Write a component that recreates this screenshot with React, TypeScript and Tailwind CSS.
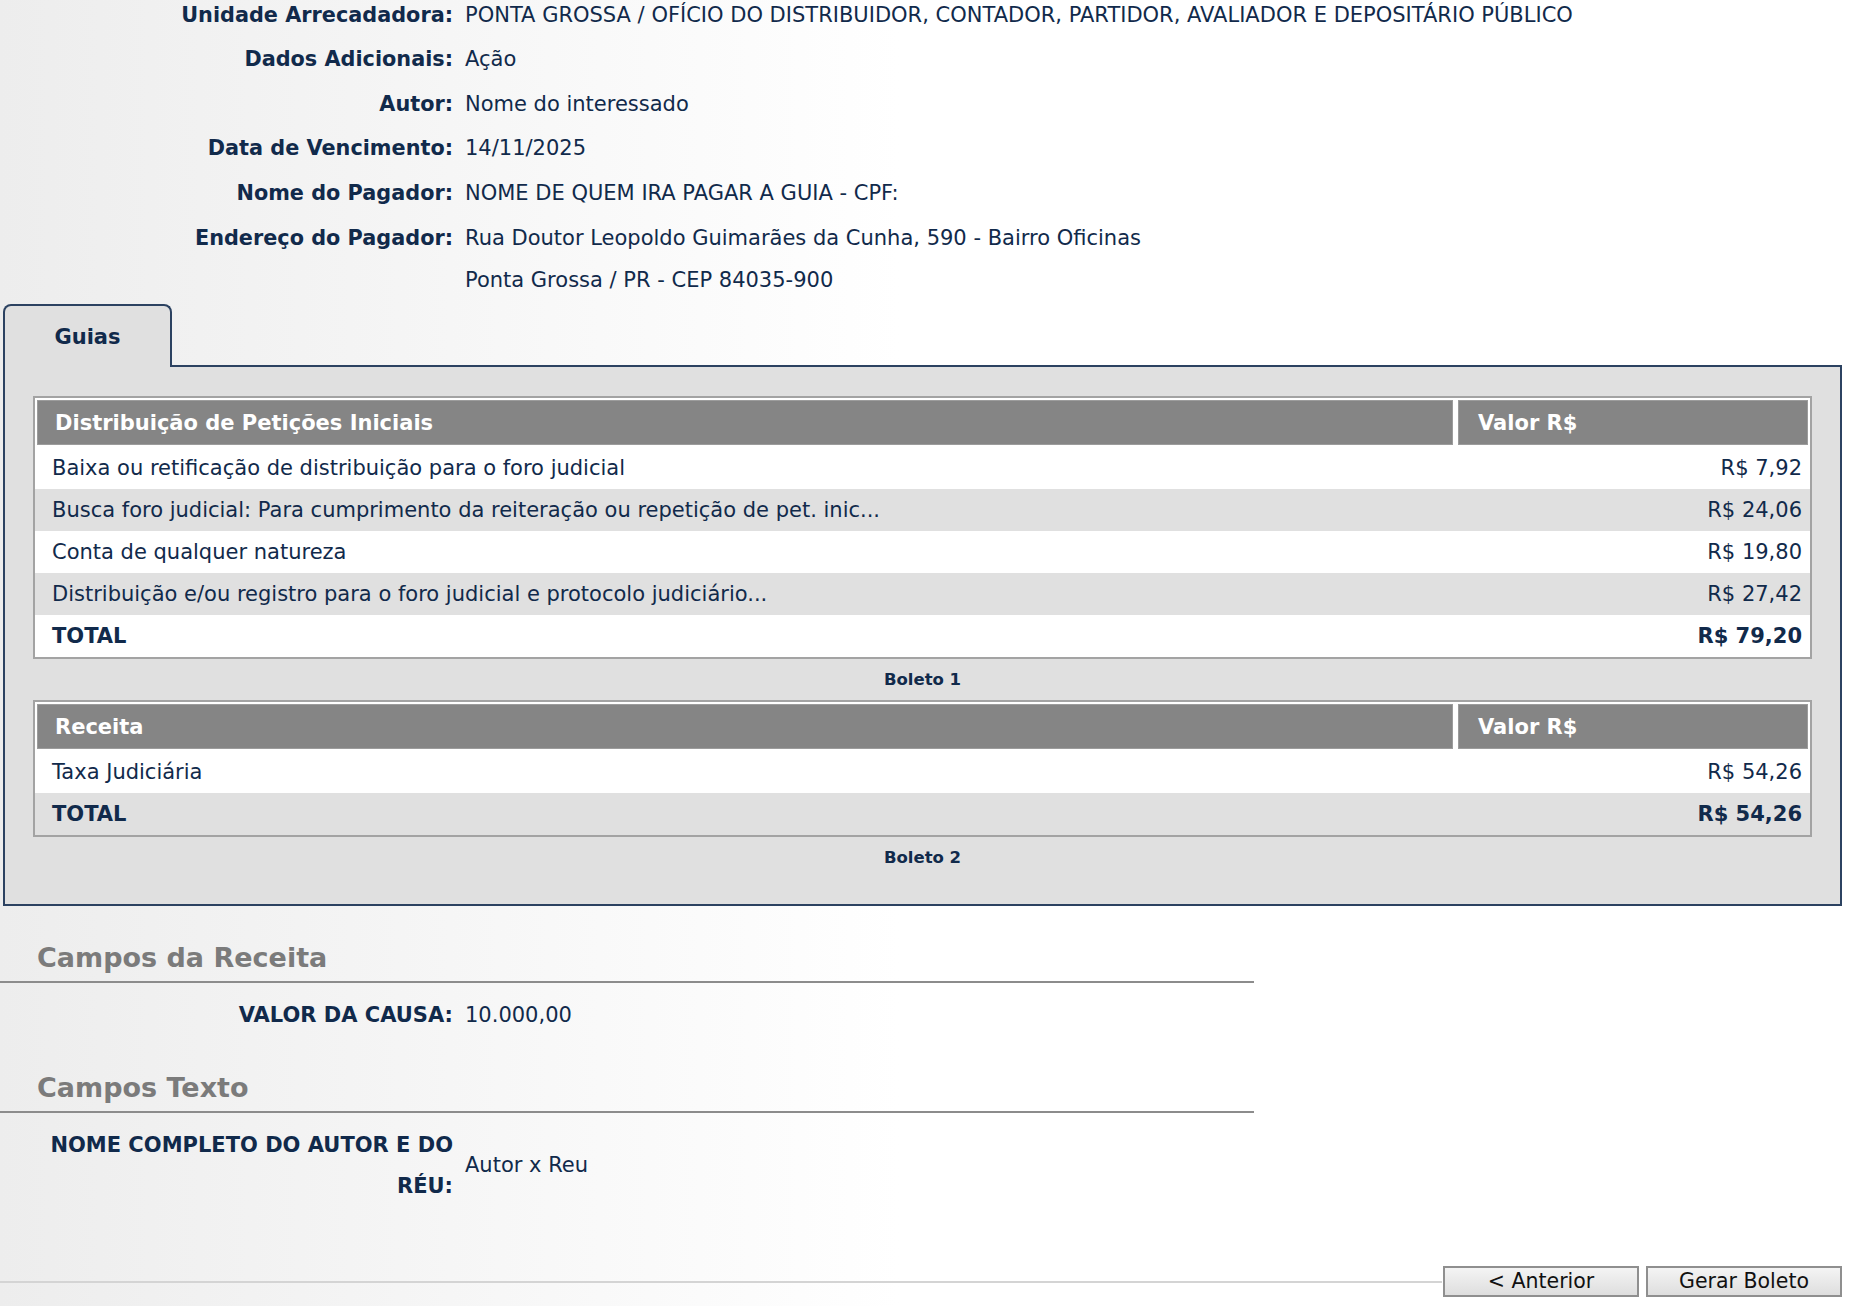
import React from "react";

const info: { label: string; value: string[] }[] = [
  { label: "Unidade Arrecadadora:", value: ["PONTA GROSSA / OFÍCIO DO DISTRIBUIDOR, CONTADOR, PARTIDOR, AVALIADOR E DEPOSITÁRIO PÚBLICO"] },
  { label: "Dados Adicionais:", value: ["Ação"] },
  { label: "Autor:", value: ["Nome do interessado"] },
  { label: "Data de Vencimento:", value: ["14/11/2025"] },
  { label: "Nome do Pagador:", value: ["NOME DE QUEM IRA PAGAR A GUIA - CPF:"] },
  { label: "Endereço do Pagador:", value: ["Rua Doutor Leopoldo Guimarães da Cunha, 590 - Bairro Oficinas", "Ponta Grossa / PR - CEP 84035-900"] },
];

const boletos = [
  {
    title: "Distribuição de Petições Iniciais",
    rows: [
      ["Baixa ou retificação de distribuição para o foro judicial", "R$ 7,92"],
      ["Busca foro judicial: Para cumprimento da reiteração ou repetição de pet. inic...", "R$ 24,06"],
      ["Conta de qualquer natureza", "R$ 19,80"],
      ["Distribuição e/ou registro para o foro judicial e protocolo judiciário...", "R$ 27,42"],
    ],
    total: "R$ 79,20",
    label: "Boleto 1",
  },
  {
    title: "Receita",
    rows: [["Taxa Judiciária", "R$ 54,26"]],
    total: "R$ 54,26",
    label: "Boleto 2",
  },
];

function GuiaTable({ b }: { b: (typeof boletos)[number] }) {
  return (
    <div>
      <div className="border-2 border-[#a3a3a3] bg-white">
        <div className="flex gap-[5px] p-[2px]">
          <div className="flex-1 h-[45px] flex items-center pt-[3px] pl-[17px] bg-[#858585] border border-[#9c9c9c] text-white font-bold">
            {b.title}
          </div>
          <div className="w-[350px] h-[45px] flex items-center pt-[3px] pl-[19px] bg-[#858585] border border-[#9c9c9c] text-white font-bold">
            Valor R$
          </div>
        </div>
        {b.rows.map((r, i) => (
          <div key={i} className={`flex items-center justify-between h-[42px] pt-[3px] pl-[17px] pr-[8px] ${i % 2 ? "bg-[#e0e0e0]" : "bg-white"}`}>
            <span>{r[0]}</span>
            <span>{r[1]}</span>
          </div>
        ))}
        <div className={`flex items-center justify-between h-[42px] pt-[3px] pl-[17px] pr-[8px] font-bold ${b.rows.length % 2 ? "bg-[#e0e0e0]" : "bg-white"}`}>
          <span>TOTAL</span>
          <span>{b.total}</span>
        </div>
      </div>
      <div className="h-[41px] pt-[2px] flex items-center justify-center text-[16.5px] font-bold">{b.label}</div>
    </div>
  );
}

export default function App() {
  return (
    <div
      className="w-[1869px] h-[1306px] overflow-hidden text-[21px] text-[#112a4b] bg-[linear-gradient(to_right,#ededed,#ffffff_900px)]"
      style={{ fontFamily: '"DejaVu Sans", Verdana, sans-serif' }}
    >
      <div className="-mt-[7px]">
        {info.map((row) => (
          <div key={row.label} className="flex">
            <div className="w-[453px] h-[44.6px] flex items-center justify-end font-bold text-[20.8px]">{row.label}</div>
            <div className="pl-[12px] flex flex-col">
              {row.value.map((v, i) => (
                <div key={i} className={`flex items-center ${i ? "h-[40px]" : "h-[44.6px]"}`}>{v}</div>
              ))}
            </div>
          </div>
        ))}
      </div>

      <div className="mt-[3px] ml-[3px] w-[1839px]">
        <div className="relative z-10 -mb-[2px] w-[169px] h-[63px] pt-[4px] border-2 border-b-0 border-[#2c4261] rounded-t-[8px] bg-[#e0e0e0] flex items-center justify-center font-bold">
          Guias
        </div>
        <div className="border-2 border-[#2c4261] bg-[#e0e0e0] pt-[29px] pb-[26px] px-[28px]">
          {boletos.map((b) => (
            <GuiaTable key={b.label} b={b} />
          ))}
        </div>
      </div>

      <div className="w-[1254px] border-b-2 border-[#8c8c8c] pl-[37px] pt-[36px] pb-[7px]">
        <div className="leading-[32px] text-[27px] font-bold text-[#7b7b7b]">Campos da Receita</div>
      </div>
      <div className="flex mt-[11px]">
        <div className="w-[453px] h-[44.6px] flex items-center justify-end font-bold">VALOR DA CAUSA:</div>
        <div className="pl-[12px] h-[44.6px] flex items-center">10.000,00</div>
      </div>

      <div className="w-[1254px] border-b-2 border-[#8c8c8c] pl-[37px] pt-[34px] pb-[7px]">
        <div className="leading-[32px] text-[27px] font-bold text-[#7b7b7b]">Campos Texto</div>
      </div>
      <div className="flex items-center mt-[12px]">
        <div className="w-[453px] text-right font-bold leading-[41px]">
          NOME COMPLETO DO AUTOR E DO
          <br />
          RÉU:
        </div>
        <div className="pl-[12px]">Autor x Reu</div>
      </div>

      <div className="flex items-center mt-[59px] pr-[27px]">
        <div className="flex-1 h-[2px] bg-[#d4d4d4] mr-[1px]" />
        <button className="w-[196px] h-[31px] border-2 border-[#8f8f8f] bg-[linear-gradient(#f4f4f4,#dedede)] text-[#111] text-[20.5px] leading-none">
          &lt; Anterior
        </button>
        <button className="ml-[7px] w-[196px] h-[31px] border-2 border-[#8f8f8f] bg-[linear-gradient(#f4f4f4,#dedede)] text-[#111] text-[20.5px] leading-none">
          Gerar Boleto
        </button>
      </div>
    </div>
  );
}
